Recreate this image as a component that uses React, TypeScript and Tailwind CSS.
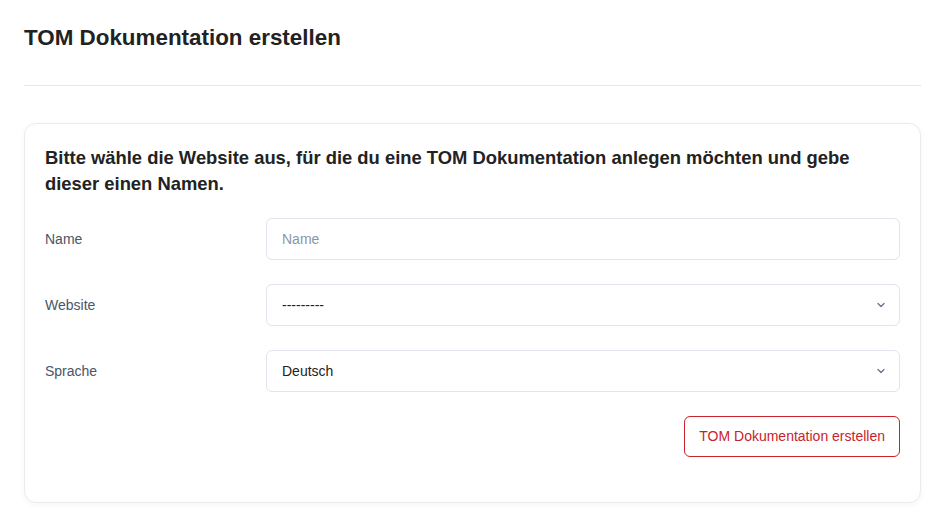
import React, { useState } from 'react';

const Chevron = () => (
  <svg className="pointer-events-none absolute right-[14px] top-1/2 -translate-y-1/2" width="10" height="10" viewBox="0 0 10 10" fill="none">
    <path d="M2 3.5 L5 6.5 L8 3.5" stroke="#64748b" strokeWidth="1.3" strokeLinecap="round" strokeLinejoin="round" />
  </svg>
);

const App: React.FC = () => {
  const [name, setName] = useState('');
  const [website, setWebsite] = useState('');
  const [sprache, setSprache] = useState('de');

  return (
    <div className="min-h-screen bg-white pl-6 pr-[15px] text-[#1f2125]" style={{ fontFamily: '"Liberation Sans", Arial, sans-serif' }}>
      {/* Seitentitel */}
      <div className="pt-[20px] pb-[30px] border-b border-[#e5e5ec]">
        <h1 className="text-[22.4px] leading-[35px] font-bold text-[#222]">TOM Dokumentation erstellen</h1>
      </div>

      {/* Formular-Karte */}
      <div className="mt-[37px] rounded-xl border border-[#e9ebf0] bg-white px-5 pt-[21px] pb-[45px] shadow-[0_2px_6px_rgba(15,23,42,0.04)]">
        <p className="text-[18.4px] leading-[26px] font-bold text-[#222] pr-2">
          Bitte wähle die Website aus, für die du eine TOM Dokumentation anlegen möchten und gebe dieser einen Namen.
        </p>

        <div className="mt-[21px] flex flex-col gap-6">
          <div className="flex items-center">
            <label className="w-[221px] shrink-0 text-[14px] text-[#4a5568]">Name</label>
            <input
              value={name}
              onChange={(e) => setName(e.target.value)}
              placeholder="Name"
              className="h-[42px] flex-1 rounded-md border border-[#e2e4ee] bg-white px-[15px] text-[14px] text-[#222] placeholder:text-[#8a96a8] outline-none"
            />
          </div>

          <div className="flex items-center">
            <label className="w-[221px] shrink-0 text-[14px] text-[#4a5568]">Website</label>
            <div className="relative flex-1">
              <select
                value={website}
                onChange={(e) => setWebsite(e.target.value)}
                className="h-[42px] w-full appearance-none rounded-md border border-[#e2e4ee] bg-white px-[15px] text-[14px] text-[#222] outline-none"
              >
                <option value="">---------</option>
              </select>
              <Chevron />
            </div>
          </div>

          <div className="flex items-center">
            <label className="w-[221px] shrink-0 text-[14px] text-[#4a5568]">Sprache</label>
            <div className="relative flex-1">
              <select
                value={sprache}
                onChange={(e) => setSprache(e.target.value)}
                className="h-[42px] w-full appearance-none rounded-md border border-[#e2e4ee] bg-white px-[15px] text-[14px] text-[#222] outline-none"
              >
                <option value="de">Deutsch</option>
                <option value="en">English</option>
              </select>
              <Chevron />
            </div>
          </div>

          <div className="flex justify-end">
            <button className="h-[41px] rounded-md border border-[#c8232c] bg-white px-[14px] text-[14px] text-[#c8232c]">
              TOM Dokumentation erstellen
            </button>
          </div>
        </div>
      </div>
    </div>
  );
};

export default App;
